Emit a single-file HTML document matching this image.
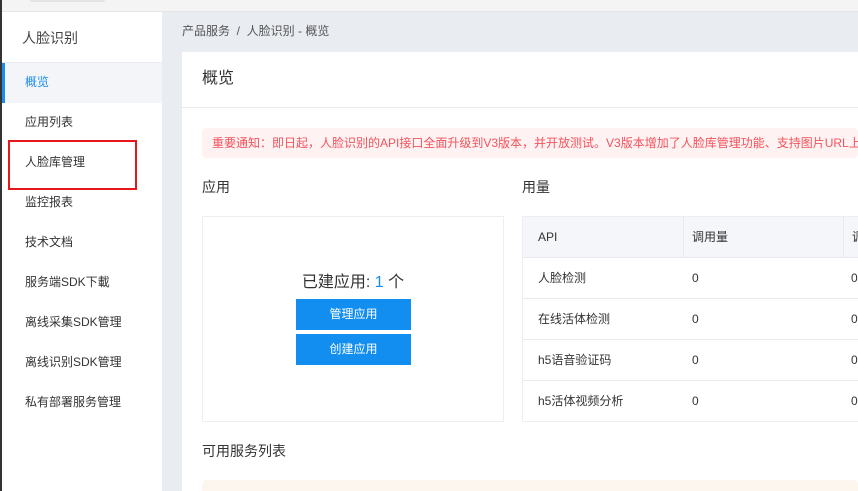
<!DOCTYPE html><html><head><meta charset="utf-8"><style>
*{margin:0;padding:0;box-sizing:border-box}
html,body{width:858px;height:491px;overflow:hidden}
body{background:#e9ecf1;font-family:"Liberation Sans","Noto Sans CJK SC",sans-serif;color:#333;position:relative;font-size:12px;line-height:16px}
.a{position:absolute;white-space:nowrap}
</style></head><body>
<div class="a" style="left:0;top:0;width:858px;height:12px;background:#f4f4f4;border-bottom:1px solid #e6e6e6"></div>
<div class="a" style="left:30px;top:0;width:75px;height:2px;background:#e4e4e4;border-radius:0 0 6px 6px"></div>
<div class="a" style="left:0;top:0;width:2px;height:491px;background:#333"></div>
<div class="a" style="left:2px;top:12px;width:160px;height:479px;background:#fff"></div>
<div class="a" style="left:22px;top:30px;font-size:14px;color:#444">人脸识别</div>
<div class="a" style="left:2px;top:62px;width:160px;height:1px;background:#e8eaee"></div>
<div class="a" style="left:2px;top:63px;width:160px;height:40px;background:#f4f5f9"></div>
<div class="a" style="left:2px;top:63px;width:3px;height:40px;background:#1a8cf0"></div>
<div class="a" style="left:25px;top:74px;color:#1a8cf0">概览</div>
<div class="a" style="left:25px;top:114px">应用列表</div>
<div class="a" style="left:25px;top:154px">人脸库管理</div>
<div class="a" style="left:25px;top:194px">监控报表</div>
<div class="a" style="left:25px;top:234px">技术文档</div>
<div class="a" style="left:25px;top:274px">服务端SDK下載</div>
<div class="a" style="left:25px;top:314px">离线采集SDK管理</div>
<div class="a" style="left:25px;top:354px">离线识别SDK管理</div>
<div class="a" style="left:25px;top:394px">私有部署服务管理</div>
<div class="a" style="left:8px;top:140px;width:129px;height:50px;border:2px solid #e8161b"></div>
<div class="a" style="left:182px;top:23px;color:#555">产品服务 &nbsp;/ &nbsp;人脸识别 - 概览</div>
<div class="a" style="left:182px;top:52px;width:676px;height:439px;background:#fff"></div>
<div class="a" style="left:202px;top:70px;font-size:16px;line-height:18px;color:#333">概览</div>
<div class="a" style="left:182px;top:107px;width:676px;height:1px;background:#e8eaee"></div>
<div class="a" style="left:202px;top:128px;width:656px;height:30px;background:#fff2f2;border-radius:4px"></div>
<div class="a" style="left:212px;top:135px;color:#f3535c">重要通知：即日起，人脸识别的API接口全面升级到V3版本，并开放测试。V3版本增加了人脸库管理功能、支持图片URL上</div>
<div class="a" style="left:202px;top:179px;font-size:14px">应用</div>
<div class="a" style="left:522px;top:179px;font-size:14px">用量</div>
<div class="a" style="left:202px;top:216px;width:302px;height:206px;border:1px solid #eceef2"></div>
<div class="a" style="left:202px;top:274px;width:302px;text-align:center;font-size:16px;line-height:18px">已建应用: <span style="color:#1a8cf0">1</span> 个</div>
<div class="a" style="left:296px;top:299px;width:115px;height:31px;background:#118ef0;color:#fff;text-align:center;line-height:31px">管理应用</div>
<div class="a" style="left:296px;top:334px;width:115px;height:31px;background:#118ef0;color:#fff;text-align:center;line-height:31px">创建应用</div>
<div class="a" style="left:522px;top:216px;width:336px;height:206px;border:1px solid #eceef2;border-right:none"></div>
<div class="a" style="left:523px;top:217px;width:335px;height:40px;background:#f5f6fa"></div>
<div class="a" style="left:683px;top:217px;width:1px;height:40px;background:#e8eaee"></div>
<div class="a" style="left:843px;top:217px;width:1px;height:40px;background:#e8eaee"></div>
<div class="a" style="left:523px;top:257px;width:335px;height:1px;background:#e8eaee"></div>
<div class="a" style="left:523px;top:298px;width:335px;height:1px;background:#e8eaee"></div>
<div class="a" style="left:523px;top:339px;width:335px;height:1px;background:#e8eaee"></div>
<div class="a" style="left:523px;top:380px;width:335px;height:1px;background:#e8eaee"></div>
<div class="a" style="left:538px;top:229px">API</div><div class="a" style="left:692px;top:229px">调用量</div><div class="a" style="left:852px;top:229px">调</div>
<div class="a" style="left:538px;top:270px">人脸检测</div><div class="a" style="left:692px;top:270px">0</div><div class="a" style="left:851px;top:270px">0</div>
<div class="a" style="left:538px;top:311px">在线活体检测</div><div class="a" style="left:692px;top:311px">0</div><div class="a" style="left:851px;top:311px">0</div>
<div class="a" style="left:538px;top:352px">h5语音验证码</div><div class="a" style="left:692px;top:352px">0</div><div class="a" style="left:851px;top:352px">0</div>
<div class="a" style="left:538px;top:393px">h5活体视频分析</div><div class="a" style="left:692px;top:393px">0</div><div class="a" style="left:851px;top:393px">0</div>
<div class="a" style="left:202px;top:443px;font-size:14px">可用服务列表</div>
<div class="a" style="left:202px;top:480px;width:656px;height:11px;background:#fdf6ef;border-radius:4px 4px 0 0"></div>
</body></html>
